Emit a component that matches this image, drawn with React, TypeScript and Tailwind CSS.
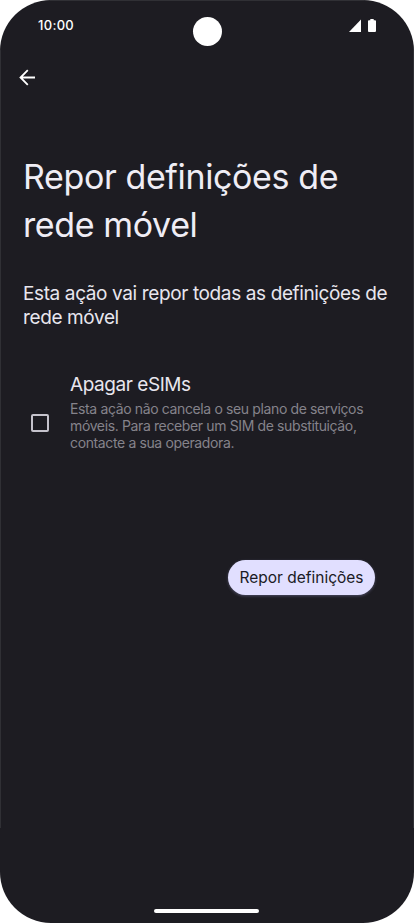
import React, { useState } from 'react';

const TITLE = ['Repor definições de', 'rede móvel'];
const SUMMARY = ['Esta ação vai repor todas as definições de', 'rede móvel'];
const ESIM_NOTE = [
  'Esta ação não cancela o seu plano de serviços',
  'móveis. Para receber um SIM de substituição,',
  'contacte a sua operadora.',
];

const Lines: React.FC<{ lines: string[] }> = ({ lines }) => (
  <>
    {lines.map((line) => (
      <span key={line} className="block whitespace-nowrap">
        {line}
      </span>
    ))}
  </>
);

const StatusBar: React.FC = () => (
  <div className="relative flex h-[52px] items-start justify-between pl-[38px] pr-[38px] pt-[18px] text-white">
    <span className="-mt-px text-[13px] font-medium leading-4 tracking-[0.3px]">10:00</span>
    {/* Camera cutout */}
    <div className="absolute left-[192.5px] top-[17px] size-[29px] rounded-full bg-white" />
    <div className="flex items-start gap-[7px]">
      <svg className="mt-px h-[13px] w-[12px]" viewBox="0 0 12 13" fill="currentColor">
        <path d="M12 0.5V13H0Z" />
      </svg>
      <svg className="mt-px h-[13px] w-[8px]" viewBox="0 0 8 13" fill="currentColor">
        <path d="M2.3 0h3.4v1.2h1.4c.5 0 .9.4.9.9v10c0 .5-.4.9-.9.9H.9c-.5 0-.9-.4-.9-.9v-10c0-.5.4-.9.9-.9h1.4z" />
      </svg>
    </div>
  </div>
);

export default function App() {
  const [eraseEsims, setEraseEsims] = useState(false);

  return (
    <div
      className="relative flex h-[923px] w-[414px] flex-col overflow-hidden rounded-[51px] bg-[#1d1c22]"
      style={{ fontFamily: 'Inter, Roboto, sans-serif' }}
    >
      {/* Screen edge highlight */}
      <div className="absolute left-0 top-[50px] h-[778px] w-px bg-[#303035]" />
      <div className="absolute right-0 top-[50px] h-[778px] w-px bg-[#303035]" />
      <div className="absolute left-[50px] right-[50px] top-0 h-px bg-[#303035]" />

      <StatusBar />

      <button className="ml-[19px] mt-[17px] size-[17px] text-white" aria-label="Voltar">
        <svg className="size-[17px]" viewBox="0 0 17 17" fill="none" stroke="currentColor" strokeWidth="1.8">
          <path d="M16 8.5H2M8.8 1.2L1.5 8.5l7.3 7.3" />
        </svg>
      </button>

      <h1 className="ml-[23px] mt-[67px] text-[34px] leading-[48px] font-normal tracking-[-0.38px] text-[#efedf5]">
        <Lines lines={TITLE} />
      </h1>

      <p className="ml-[23px] mt-[33px] text-[19px] leading-6 tracking-[-0.38px] text-[#e8e6ee]">
        <Lines lines={SUMMARY} />
      </p>

      <label className="mt-[43px] flex">
        <input
          type="checkbox"
          className="ml-[31px] mt-[41px] size-[18px] shrink-0 appearance-none rounded-[2px] border-2 border-[#c5c3cc] checked:bg-[#e1dfff]"
          checked={eraseEsims}
          onChange={(e) => setEraseEsims(e.target.checked)}
        />
        <span className="ml-[21px] block">
          <span className="block text-[19px] leading-6 tracking-[-0.45px] text-[#e8e6ee]">Apagar eSIMs</span>
          <span className="mt-[3px] block text-[14px] leading-[17px] tracking-[-0.37px] text-[#85838b]">
            <Lines lines={ESIM_NOTE} />
          </span>
        </span>
      </label>

      <button className="ml-[228px] mt-[109px] h-[35px] w-[147px] whitespace-nowrap rounded-full bg-[#e1dfff] pt-px text-[15.5px] tracking-[0px] text-[#1b1b24] shadow-[0_1px_3px_rgba(150,150,200,0.4)]">
        Repor definições
      </button>

      {/* Gesture bar */}
      <div className="mb-[10px] ml-[154px] mt-auto h-[4px] w-[105px] rounded-full bg-white" />
    </div>
  );
}
